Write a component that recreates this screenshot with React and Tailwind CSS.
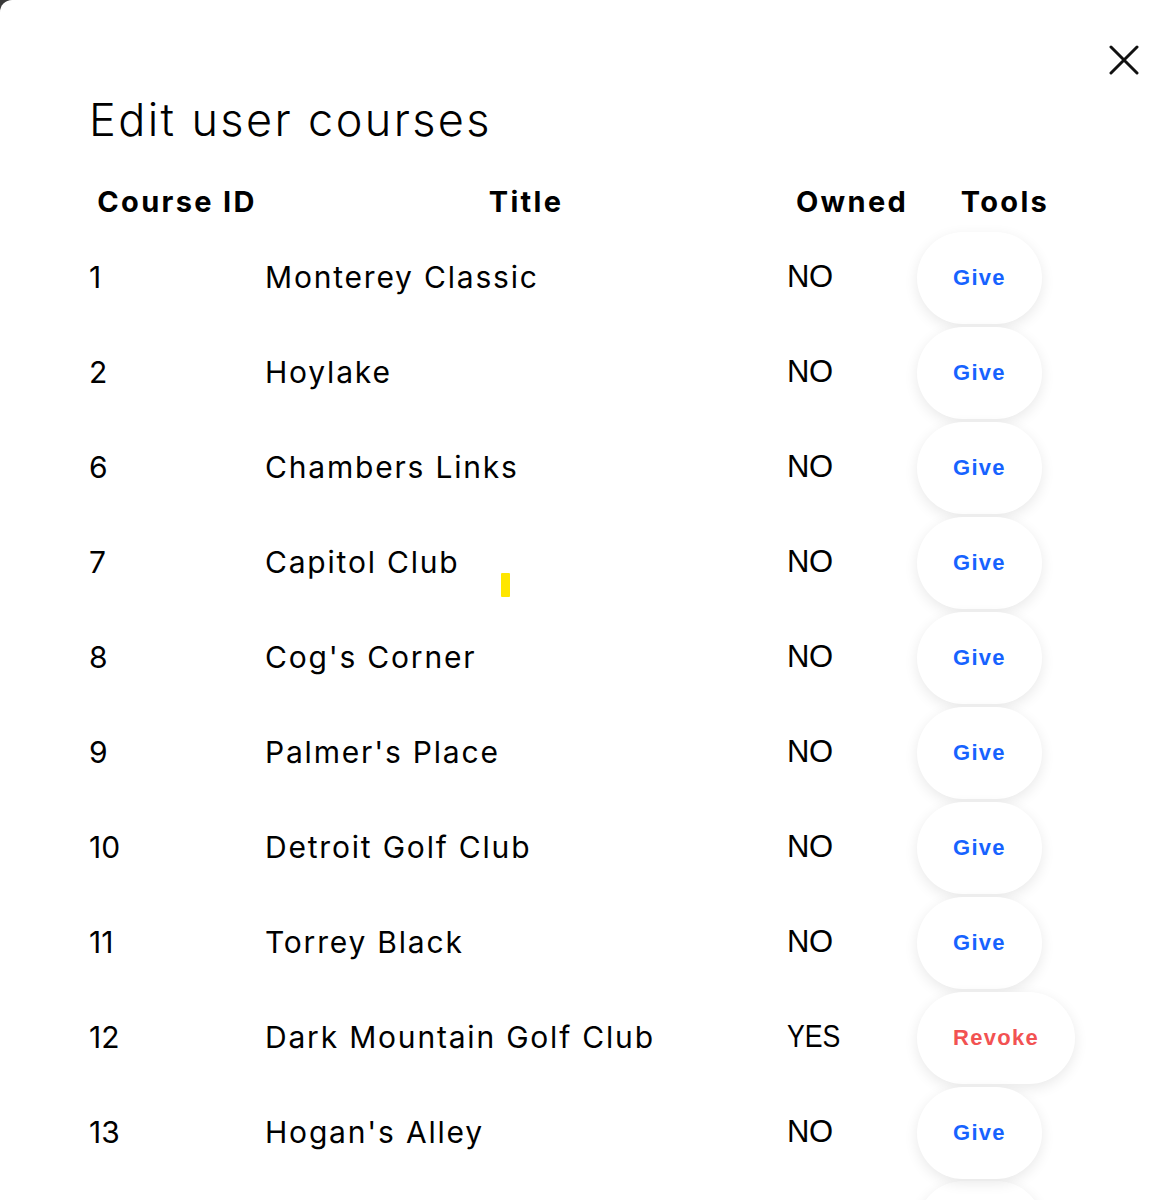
import React from 'react';

const courses = [
  { id: 1, title: 'Monterey Classic', owned: false },
  { id: 2, title: 'Hoylake', owned: false },
  { id: 6, title: 'Chambers Links', owned: false },
  { id: 7, title: 'Capitol Club', owned: false },
  { id: 8, title: "Cog's Corner", owned: false },
  { id: 9, title: "Palmer's Place", owned: false },
  { id: 10, title: 'Detroit Golf Club', owned: false },
  { id: 11, title: 'Torrey Black', owned: false },
  { id: 12, title: 'Dark Mountain Golf Club', owned: true },
  { id: 13, title: "Hogan's Alley", owned: false },
];

const sans = { fontFamily: 'Inter, "Noto Sans", sans-serif' };
const arial = { fontFamily: '"Liberation Sans", Arial, sans-serif' };

function ToolButton({ owned }) {
  return (
    <button
      className={
        'h-[92px] rounded-[46px] bg-white px-[36px] text-[22px] font-bold tracking-[1.3px] shadow-[0_4px_14px_rgba(0,0,0,0.09)] ' +
        (owned ? 'text-[#f25252]' : 'text-[#1763ff]')
      }
      style={arial}
    >
      {owned ? 'Revoke' : 'Give'}
    </button>
  );
}

export default function App() {
  return (
    <div className="h-[1200px] overflow-hidden bg-[#3a3a3a]">
      <div className="relative h-[1200px] overflow-hidden rounded-tl-[12px] bg-white pl-[89px] pt-[92px] text-black" style={sans}>
        {/* close */}
        <button className="absolute left-[1109px] top-[45px] h-[30px] w-[30px]" aria-label="Close">
          <svg viewBox="0 0 30 30" className="h-[30px] w-[30px]" fill="none" stroke="#111" strokeWidth="3" strokeLinecap="round">
            <path d="M2 2 L28 28 M28 2 L2 28" />
          </svg>
        </button>

        <h2 className="text-[45px] font-light leading-[56px] tracking-[2.4px]">Edit user courses</h2>

        <table className="mt-[26px] w-[1004px] table-fixed border-collapse">
          <colgroup>
            <col className="w-[176px]" />
            <col className="w-[522px]" />
            <col className="w-[130px]" />
            <col className="w-[176px]" />
          </colgroup>
          <thead>
            <tr className="h-[56px] text-[29px] font-bold tracking-[2.3px]">
              <th className="text-center">Course ID</th>
              <th className="text-center">Title</th>
              <th className="text-center">Owned</th>
              <th className="text-center">Tools</th>
            </tr>
          </thead>
          <tbody>
            {courses.map((c) => (
              <tr key={c.id} className="h-[95px] text-[30px]">
                <td className="text-left">{c.id}</td>
                <td className="text-left tracking-[1.8px]">{c.title}</td>
                <td className="text-left text-[31px] tracking-[-0.5px]" style={arial}>
                  {c.owned ? (
                    <span className="inline-block origin-left scale-x-[0.86] tracking-[0px]">YES</span>
                  ) : (
                    'NO'
                  )}
                </td>
                <td className="text-left">
                  <ToolButton owned={c.owned} />
                </td>
              </tr>
            ))}
            {/* next row, only its button top shows above the fold */}
            <tr className="h-[95px]">
              <td />
              <td />
              <td />
              <td className="text-left align-top pt-[1px]">
                <div className="h-[92px] w-[126px] rounded-[46px] bg-white shadow-[0_4px_14px_rgba(0,0,0,0.09)]" />
              </td>
            </tr>
          </tbody>
        </table>

        <span className="absolute left-[501px] top-[573px] h-[24px] w-[9px] rounded-[1px] bg-[#ffe600]" />
      </div>
    </div>
  );
}
